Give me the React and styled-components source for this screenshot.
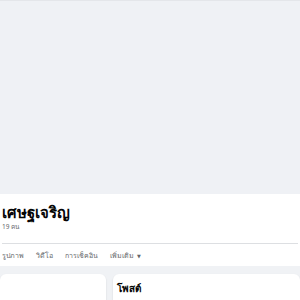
import React from 'react';
import styled, { createGlobalStyle } from 'styled-components';

const Global = createGlobalStyle`
    body {
        margin: 0;
        background: #f0f2f5;
        font-family: "Noto Sans", "DejaVu Sans", sans-serif;
    }
`;

const Page = styled.div`
    width: 300px;
    height: 300px;
    overflow: hidden;
    background: #f0f2f5;
`;

const Cover = styled.div`
    height: 193px;
    background: #eff1f5;
    border-top: 1px solid #e4e6ea;
`;

const Header = styled.div`
    background: #fff;
    padding: 7px 2px 0;
`;

const Name = styled.h1`
    margin: 0;
    font-size: 15px;
    font-weight: 700;
    color: #050505;
    line-height: 22px;
`;

const Members = styled.div`
    font-size: 6.5px;
    color: #65676b;
    line-height: 8px;
    margin-bottom: 12px;
`;

const Tabs = styled.div`
    display: flex;
    gap: 12px;
    align-items: center;
    height: 21px;
    border-top: 1px solid #dddfe2;
    padding-top: 1px;
`;

const Tab = styled.span`
    font-size: 7px;
    font-weight: 500;
    color: #65676b;
`;

const Caret = styled.span`
    font-size: 5px;
    margin-left: 3px;
`;

const Body = styled.div`
    display: flex;
    gap: 7px;
    padding-top: 8px;
`;

const Card = styled.div`
    background: #fff;
    border-radius: 6px;
    height: 40px;
    width: ${p => p.width || 'auto'};
    flex: ${p => p.grow ? 1 : 'none'};
    box-shadow: 0 1px 2px rgba(0, 0, 0, 0.12);
    padding: ${p => p.grow ? '7px 4px' : 0};
    box-sizing: border-box;
`;

const CardTitle = styled.div`
    font-size: 10px;
    font-weight: 700;
    color: #050505;
    line-height: 14px;
`;

export default function App() {
    return (
        <Page>
            <Global />
            <Cover />
            <Header>
                <Name>เศษฐเจริญ</Name>
                <Members>19 คน</Members>
                <Tabs>
                    <Tab>รูปภาพ</Tab>
                    <Tab>วิดีโอ</Tab>
                    <Tab>การเช็คอิน</Tab>
                    <Tab>เพิ่มเติม<Caret>▼</Caret></Tab>
                </Tabs>
            </Header>
            <Body>
                <Card width="106px" />
                <Card grow>
                    <CardTitle>โพสต์</CardTitle>
                </Card>
            </Body>
        </Page>
    );
}
